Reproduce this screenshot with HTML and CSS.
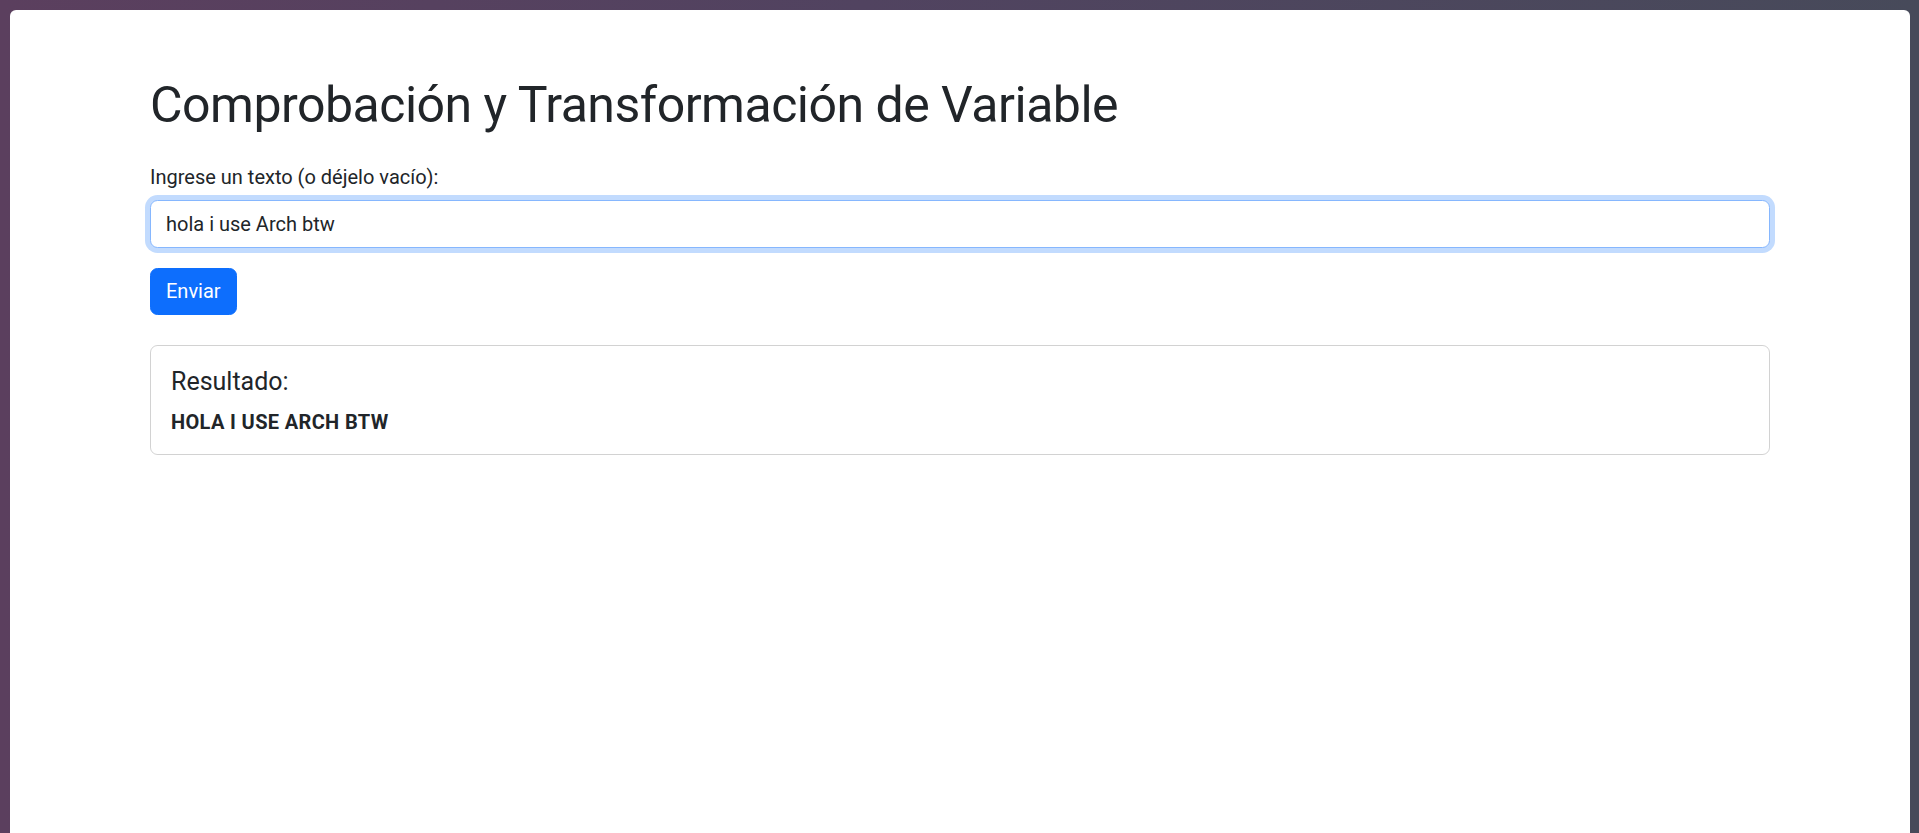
FILE: index.html
```html
<!DOCTYPE html>
<html lang="es">
<head>
<meta charset="utf-8">
<title>Comprobación y Transformación de Variable</title>
<link rel="stylesheet" href="styles.css">
</head>
<body>
<div class="window">
  <div class="container">
    <h1 class="title">Comprobación y Transformación de Variable</h1>
    <form class="form">
      <label class="form-label" for="texto">Ingrese un texto (o déjelo vacío):</label>
      <input class="form-control" id="texto" type="text" value="hola i use Arch btw">
      <button class="btn" type="button">Enviar</button>
    </form>
    <div class="card">
      <h5 class="card-title">Resultado:</h5>
      <p class="card-text"><strong>HOLA I USE ARCH BTW</strong></p>
    </div>
  </div>
</div>
</body>
</html>
```
FILE: styles.css
```css
html, body {
  margin: 0;
  padding: 0;
  height: 100%;
}
body {
  background: linear-gradient(90deg, #5b3f5e 0%, #514360 45%, #474a5a 100%);
  font-family: Roboto, "Liberation Sans", sans-serif;
  color: #212529;
  overflow: hidden;
}
.window {
  margin: 10px 9px 0 10px;
  min-height: calc(100vh - 10px);
  background: #fff;
  border-radius: 6px 6px 0 0;
  box-sizing: border-box;
  padding-top: 65px;
}
.container {
  width: 1620px;
  margin: 0 auto;
}
.title {
  margin: 0 0 27px;
  font-size: 50px;
  line-height: 60px;
  font-weight: 400;
  letter-spacing: -0.5px;
}
.form {
  display: flex;
  flex-direction: column;
  align-items: flex-start;
}
.form-label {
  display: block;
  font-size: 20px;
  line-height: 30px;
  margin-bottom: 8px;
}
.form-control {
  box-sizing: border-box;
  width: 100%;
  height: 47.5px;
  margin: 0 0 20px;
  padding: 7.5px 15px;
  font-family: inherit;
  font-size: 20px;
  line-height: 30px;
  color: #212529;
  background: #fff;
  border: 1px solid #86b7fe;
  border-radius: 7.5px;
  box-shadow: 0 0 0 5px rgba(13, 110, 253, 0.25);
  outline: none;
}
.btn {
  box-sizing: border-box;
  height: 47.5px;
  margin: 0;
  padding: 7.5px 15px;
  font-family: inherit;
  font-size: 20px;
  line-height: 30px;
  color: #fff;
  background: #0d6efd;
  border: 1px solid #0d6efd;
  border-radius: 7.5px;
}
.card {
  margin-top: 30px;
  border: 1px solid rgba(0, 0, 0, 0.175);
  border-radius: 7.5px;
  padding: 21px 20px 17px;
}
.card-title {
  margin: 0 0 10px;
  font-size: 25px;
  line-height: 30px;
  font-weight: 400;
}
.card-text {
  margin: 0;
  font-size: 20px;
  line-height: 30px;
}
.card-text strong {
  font-weight: 700;
  letter-spacing: 0.35px;
}
```
